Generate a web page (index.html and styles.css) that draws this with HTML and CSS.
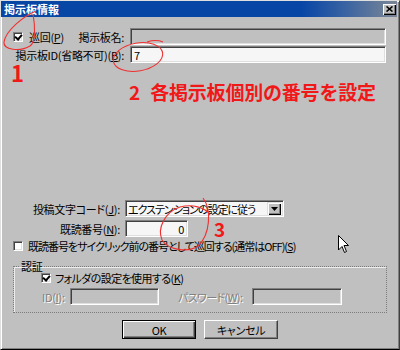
FILE: index.html
```html
<!DOCTYPE html>
<html lang="ja">
<head>
<meta charset="utf-8">
<title>掲示板情報</title>
<link rel="stylesheet" href="styles.css">
</head>
<body>
<div class="window">
  <div class="titlebar">
    <span class="title">掲示板情報</span>
    <span class="close"><svg width="7" height="6" viewBox="0 0 7 6"><path d="M0.5 0.5 L6.5 5.5 M6.5 0.5 L0.5 5.5" stroke="#000" stroke-width="1.6"/></svg></span>
  </div>
  <div class="content">
    <div class="top">
      <div class="lbl row1lbl"><span class="chk checked"></span><span>巡回(<u>P</u>)</span><span class="push">掲示板名:</span></div>
      <div class="field disabled"></div>
      <div class="lbl">掲示板ID(省略不可)(<u>B</u>):</div>
      <div class="field">7</div>
    </div>
    <div class="lower">
      <div class="lbl">投稿文字コード(<u>J</u>):</div>
      <div class="select"><span class="seltext">エクステンションの設定に従う</span><span class="ddbtn"><svg width="7" height="4" viewBox="0 0 7 4"><path d="M0 0 H7 L3.5 4 Z" fill="#000"/></svg></span></div>
      <div class="lbl">既読番号(<u>N</u>):</div>
      <div class="field num">0</div>
    </div>
    <div class="ckrow"><span class="chk"></span><span class="long">既読番号をサイクリック前の番号として巡回する(通常はOFF)(<u>S</u>)</span></div>
    <fieldset class="group">
      <legend>認証</legend>
      <div class="ckrow inner"><span class="chk checked"></span><span class="kana">フォルダの設定を使用する(<u>K</u>)</span></div>
      <div class="authrow">
        <span class="dis idl">ID(<u>I</u>):</span>
        <div class="field disabled idf"></div>
        <span class="dis pwl">パスワード(<u>W</u>):</span>
        <div class="field disabled pwf"></div>
      </div>
    </fieldset>
    <div class="buttons">
      <button class="btn default">OK</button>
      <button class="btn">キャンセル</button>
    </div>
  </div>

  <svg class="marks" width="400" height="350" viewBox="0 0 400 350">
    <path d="M36,11 C24,16 6,30 4,42 C3,50 20,52 30,46 C36,42 35,25 33,14" fill="none" stroke="#f03030" stroke-width="1.1"/>
    <ellipse cx="138" cy="57" rx="25" ry="14" transform="rotate(-10 138 57)" fill="none" stroke="#f03030" stroke-width="1.1"/>
    <path d="M147,42 C153,40 158,40 163,42" fill="none" stroke="#f03030" stroke-width="1.1"/>
    <path d="M203,198 C212,210 210,235 198,246 C188,253 168,250 162,240 C157,228 165,212 180,207 C192,204 205,207 210,215" fill="none" stroke="#f03030" stroke-width="1.1"/>
  </svg>
  <span class="annot n1">1</span>
  <span class="annot n2">2<span class="sp">各掲示板個別の番号を設定</span></span>
  <span class="annot n3">3</span>
  <svg class="cursor" width="12" height="19" viewBox="0 0 12 19"><path d="M0.5 0.5 L0.5 15 L4 11.5 L6.5 17.5 L8.5 16.5 L6 10.5 L10.5 10.5 Z" fill="#fff" stroke="#000" stroke-width="1"/></svg>
</div>
</body>
</html>
```
FILE: styles.css
```css
* { box-sizing: border-box; }
body {
  margin: 0;
  font-family: "Noto Sans CJK JP", sans-serif;
  font-size: 11px;
  line-height: 12px;
  color: #000;
  font-feature-settings: "palt";
  letter-spacing: -0.3px;
}
.window {
  position: relative;
  width: 400px;
  height: 350px;
  background: #c0c0c0;
  border: 1px solid;
  border-color: #dfdfdf #404040 #000 #dfdfdf;
  box-shadow: inset 1px 1px #fff, inset -1px -1px #808080;
  overflow: hidden;
}
.titlebar {
  height: 16px;
  margin-right: 2px;
  display: flex;
  align-items: center;
  justify-content: space-between;
  padding: 0 1px 0 3px;
  background: linear-gradient(to right, #0846a6 0%, #0846a6 76%, #3a63a2 87%, #6d7f98 97%, #7a8494 100%);
}
.title { color: #fff; font-size: 11px; font-weight: bold; letter-spacing: 0; }
.close {
  width: 13px;
  height: 11px;
  background: #c0c0c0;
  box-shadow: inset 1px 1px #fff, inset -1px -1px #000, inset -2px -2px #808080;
  display: flex;
  align-items: center;
  justify-content: center;
}
.content { padding: 11px 12px 0 12px; }
.top {
  display: grid;
  grid-template-columns: 114px 256px;
  column-gap: 3px;
  row-gap: 1px;
}
.lbl {
  display: flex;
  align-items: center;
  justify-content: flex-end;
  padding-right: 3px;
  white-space: nowrap;
}
.row1lbl { justify-content: flex-start; }
.push { margin-left: auto; }
.field {
  height: 17px;
  border: 1px solid;
  border-color: #808080 #fff #fff #808080;
  box-shadow: inset 1px 1px #404040, inset -1px -1px #dfdfdf;
  background: #f6f6f6;
  padding: 0 3px;
  display: flex;
  align-items: center;
}
.field.disabled { background: #c0c0c0; }
.field.num { justify-content: flex-end; width: 63px; }
.chk {
  flex: none;
  width: 10px;
  height: 10px;
  margin-right: 6px;
  background: #fff;
  border: 1px solid;
  border-color: #808080 #fff #fff #808080;
  box-shadow: inset 1px 1px #404040, inset -1px -1px #dfdfdf;
  position: relative;
}
.chk.checked::after {
  content: "";
  position: absolute;
  left: 1px;
  top: 0px;
  width: 3px;
  height: 5px;
  border: solid #000;
  border-width: 0 2px 2px 0;
  transform: translate(1px, 0) rotate(40deg);
}
.lower {
  margin-top: 137px;
  display: grid;
  grid-template-columns: 109px auto;
  column-gap: 3px;
  row-gap: 3px;
  justify-items: start;
}
.lower .lbl { justify-self: stretch; padding-right: 2px; }
.select {
  width: 159px;
  height: 17px;
  border: 1px solid;
  border-color: #808080 #fff #fff #808080;
  box-shadow: inset 1px 1px #404040, inset -1px -1px #dfdfdf;
  background: #f6f6f6;
  display: flex;
  align-items: center;
  justify-content: space-between;
  padding: 2px;
}
.seltext { white-space: nowrap; letter-spacing: -1px; }
.ddbtn {
  flex: none;
  width: 14px;
  height: 13px;
  background: #c0c0c0;
  box-shadow: inset 1px 1px #dfdfdf, inset 2px 2px #fff, inset -1px -1px #000, inset -2px -2px #808080;
  display: flex;
  align-items: center;
  justify-content: center;
}
.ckrow {
  margin-top: 3px;
  display: flex;
  align-items: center;
  white-space: nowrap;
}
.ckrow .chk { margin-right: 5px; }
.long { letter-spacing: -1px; }
.kana { letter-spacing: -0.6px; }
.group {
  margin: 8px 0 0 0;
  width: 374px;
  min-width: 0;
  border: 1px dotted #7c7c7c;
  box-shadow: inset 1px 1px #eee;
  padding: 0 0 7px 27px;
}
.group legend {
  padding: 0 2px;
  margin-left: -22px;
  line-height: 12px;
}
.ckrow.inner { margin-top: 0; }
.ckrow.inner .chk { margin-right: 4px; }
.authrow {
  margin-top: 4px;
  display: flex;
  align-items: center;
}
.dis { color: #808080; text-shadow: 1px 1px #fff; white-space: nowrap; }
.idl { width: 28px; margin-left: 1px; }
.idf { width: 89px; }
.pwl { width: 74px; margin-left: 19px; letter-spacing: -0.6px; }
.pwf { width: 90px; }
.buttons {
  margin-top: 7px;
  display: flex;
  justify-content: center;
  gap: 8px;
}
.btn {
  width: 74px;
  height: 19px;
  font: inherit;
  font-size: 11px;
  letter-spacing: -0.3px;
  color: #000;
  background: #c0c0c0;
  border: 1px solid;
  border-color: #fff #404040 #404040 #fff;
  box-shadow: inset -1px -1px #808080;
  padding: 0;
}
.btn.default {
  border: 1px solid #000;
  box-shadow: inset 1px 1px #fff, inset -1px -1px #404040, inset -2px -2px #808080;
}
.marks { position: absolute; left: -1px; top: -1px; pointer-events: none; }
.annot {
  position: absolute;
  color: #f01818;
  font-weight: bold;
  font-family: "Noto Sans CJK JP", sans-serif;
  font-feature-settings: normal;
  letter-spacing: 0;
  white-space: nowrap;
}
.n1 { left: 10px; top: 63px; font-size: 22px; line-height: 16px; }
.n2 { left: 128px; top: 81px; font-size: 19px; line-height: 19px; }
.n2 .sp { margin-left: 10px; letter-spacing: -0.2px; }
.n3 { left: 213px; top: 221px; font-size: 19px; line-height: 14px; }
.cursor { position: absolute; left: 337px; top: 234px; }
```
